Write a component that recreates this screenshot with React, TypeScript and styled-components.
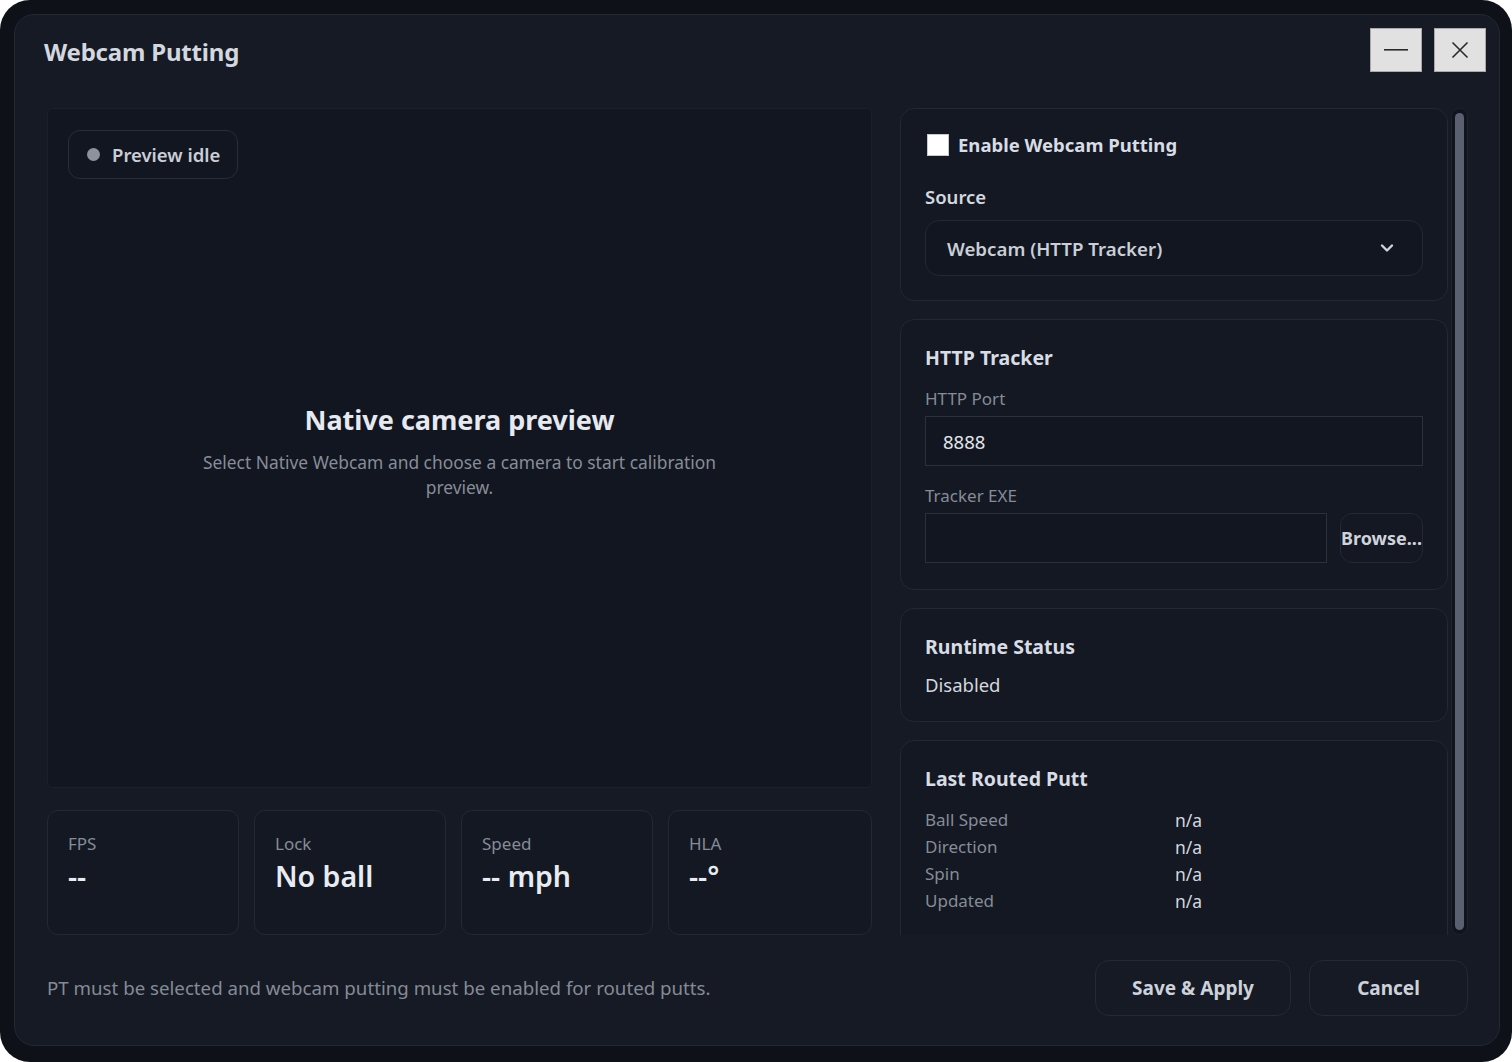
import React from "react";
import styled, { createGlobalStyle } from "styled-components";

const GlobalStyle = createGlobalStyle`
	html, body {
		margin: 0;
		padding: 0;
		background: #ffffff;
	}
	body {
		font-family: "Noto Sans", "Open Sans", sans-serif;
		color: #d6dae2;
	}
	* {
		box-sizing: border-box;
	}
`;

const Frame = styled.div`
	width: 1512px;
	height: 1062px;
	background: #0e1218;
	border-radius: 30px;
	padding: 14px 12px 16px 14px;
`;

const Panel = styled.div`
	height: 100%;
	background: #151a24;
	border: 1px solid #222834;
	border-radius: 20px;
	display: flex;
	flex-direction: column;
	padding: 13px 31px 30px 32px;
`;

const Header = styled.div`
	display: flex;
	align-items: flex-start;
	justify-content: space-between;
	height: 58px;
	margin-bottom: 22px;
`;

const Title = styled.h1`
	margin: 0;
	margin-top: 7px;
	margin-left: -3px;
	font-size: 24px;
	font-weight: 700;
	color: #d3d7df;
	letter-spacing: -0.2px;
`;

const WindowButtons = styled.div`
	display: flex;
	gap: 12px;
	margin-right: -18px;
`;

const WinButton = styled.button`
	width: 52px;
	height: 44px;
	background: #e1e1e1;
	border: 1px solid #a9a9a9;
	display: flex;
	align-items: center;
	justify-content: center;
	padding: 0;
	color: #2a2a2a;
`;

const Main = styled.div`
	display: grid;
	grid-template-columns: 825px 1fr;
	column-gap: 28px;
	height: 827px;
`;

const LeftColumn = styled.div`
	display: flex;
	flex-direction: column;
	gap: 22px;
`;

const Preview = styled.div`
	position: relative;
	height: 680px;
	background: #111620;
	border: 1px solid #1b212c;
	border-radius: 6px;
	display: flex;
	flex-direction: column;
	align-items: center;
	justify-content: center;
	padding-top: 4px;
`;

const StatusPill = styled.div`
	position: absolute;
	top: 21px;
	left: 20px;
	display: flex;
	align-items: center;
	gap: 12px;
	height: 49px;
	padding: 0 17px 0 18px;
	border: 1px solid #272d39;
	border-radius: 12px;
	background: #121620;
	font-size: 18.5px;
	font-weight: 600;
	color: #c9ced7;
`;

const Dot = styled.span`
	width: 13px;
	height: 13px;
	border-radius: 50%;
	background: #8d929c;
`;

const PreviewTitle = styled.div`
	font-size: 27px;
	font-weight: 700;
	color: #e6e9ef;
	margin-bottom: 12px;
`;

const PreviewHint = styled.div`
	max-width: 530px;
	text-align: center;
	font-size: 17.4px;
	line-height: 25px;
	color: #878d98;
`;

const Stats = styled.div`
	display: grid;
	grid-template-columns: 192px 192px 192px 1fr;
	gap: 15px;
	height: 125px;
`;

const StatCard = styled.div`
	border: 1px solid #222834;
	border-radius: 11px;
	background: #131823;
	padding: 22px 20px;
`;

const StatLabel = styled.div`
	font-size: 17px;
	color: #868c97;
	line-height: 22px;
`;

const StatValue = styled.div`
	font-size: 28.5px;
	font-weight: 600;
	color: #e8ebf0;
	line-height: 36px;
	margin-top: 3px;
`;

const RightColumn = styled.div`
	display: flex;
	gap: 3px;
	height: 827px;
`;

const CardList = styled.div`
	flex: 1;
	display: flex;
	flex-direction: column;
	gap: 18px;
	overflow: hidden;
`;

const Card = styled.div<{ $h?: number }>`
	flex-shrink: 0;
	height: ${(p) => (p.$h ? `${p.$h}px` : "auto")};
	border: 1px solid #222834;
	border-radius: 14px;
	background: #131822;
	padding: 24px;
`;

const ScrollTrack = styled.div`
	width: 17px;
	padding: 4px 3px;
	border: 1px solid #1d232e;
	border-radius: 9px;
	background: #10141c;
`;

const ScrollThumb = styled.div`
	height: 100%;
	border-radius: 6px;
	background: #5a6070;
`;

const CheckRow = styled.label`
	display: flex;
	align-items: center;
	gap: 9px;
	font-size: 18.5px;
	font-weight: 700;
	color: #d8dce4;
	margin-top: -1px;
`;

const CheckBox = styled.span`
	width: 22px;
	height: 22px;
	background: #ffffff;
	border: 1px solid #c9c9c9;
	margin-left: 2px;
`;

const SectionTitle = styled.div`
	font-size: 19.5px;
	font-weight: 700;
	color: #d8dce4;
	margin-top: 0;
`;

const SubTitle = styled.div`
	font-size: 18.5px;
	font-weight: 600;
	color: #d3d7df;
	margin-top: 27px;
	margin-bottom: 11px;
`;

const Select = styled.div`
	height: 56px;
	border: 1px solid #222834;
	border-radius: 14px;
	background: #121620;
	display: flex;
	align-items: center;
	justify-content: space-between;
	padding: 0 28px 0 21px;
	font-size: 18.7px;
	font-weight: 600;
	color: #c9ced7;
`;

const FieldLabel = styled.div<{ $mt: number }>`
	font-size: 17px;
	color: #868c97;
	margin-top: ${(p) => p.$mt}px;
	margin-bottom: 6px;
`;

const Input = styled.div<{ $w?: number }>`
	height: 50px;
	width: ${(p) => (p.$w ? `${p.$w}px` : "100%")};
	border: 1px solid #2a303c;
	background: #121620;
	display: flex;
	align-items: center;
	padding: 0 17px;
	font-size: 18.5px;
	color: #e2e5ea;
`;

const InputRow = styled.div`
	display: flex;
	gap: 13px;
	margin-top: 2px;
`;

const BrowseButton = styled.button`
	flex: 1;
	height: 50px;
	border: 1px solid #222834;
	border-radius: 12px;
	background: #131822;
	color: #cfd3db;
	font-family: inherit;
	font-size: 18px;
	font-weight: 700;
	padding: 0;
	white-space: nowrap;
	overflow: visible;
`;

const StatusText = styled.div`
	font-size: 18.5px;
	color: #d3d7df;
	margin-top: 12px;
`;

const PuttGrid = styled.div`
	display: grid;
	grid-template-columns: 250px 1fr;
	margin-top: 14px;
`;

const PuttLabel = styled.div`
	font-size: 17px;
	line-height: 27px;
	color: #868c97;
`;

const PuttValue = styled.div`
	font-size: 17.5px;
	line-height: 27px;
	color: #d3d7df;
	transform: translateY(1px);
`;

const Footer = styled.div`
	display: flex;
	align-items: center;
	margin-top: 25px;
	height: 55px;
`;

const FooterNote = styled.div`
	flex: 1;
	font-size: 18.7px;
	color: #858b96;
`;

const FooterButton = styled.button<{ $w: number }>`
	width: ${(p) => p.$w}px;
	height: 56px;
	border: 1px solid #232935;
	border-radius: 14px;
	background: #151a24;
	color: #cdd2da;
	font-family: inherit;
	font-size: 19px;
	font-weight: 700;
	margin-left: 18px;
`;

function Chevron() {
	return (
		<svg width="14" height="10" viewBox="0 0 14 10" fill="none">
			<path d="M2 2.5 L7 7.5 L12 2.5" stroke="#cfd3db" strokeWidth="2.4" strokeLinecap="round" strokeLinejoin="round" />
		</svg>
	);
}

const stats = [
	{ label: "FPS", value: "--" },
	{ label: "Lock", value: "No ball" },
	{ label: "Speed", value: "-- mph" },
	{ label: "HLA", value: "--°" },
];

const putt = [
	["Ball Speed", "n/a"],
	["Direction", "n/a"],
	["Spin", "n/a"],
	["Updated", "n/a"],
];

export default function App() {
	return (
		<>
			<GlobalStyle />
			<Frame>
				<Panel>
					<Header>
						<Title>Webcam Putting</Title>
						<WindowButtons>
							<WinButton aria-label="Minimize">
								<svg width="24" height="4" viewBox="0 0 24 4">
									<rect x="0" y="1" width="24" height="1.6" fill="#2b2b2b" />
								</svg>
							</WinButton>
							<WinButton aria-label="Close">
								<svg width="18" height="18" viewBox="0 0 18 18">
									<path d="M1.5 1.5 L16.5 16.5 M16.5 1.5 L1.5 16.5" stroke="#2b2b2b" strokeWidth="1.6" />
								</svg>
							</WinButton>
						</WindowButtons>
					</Header>

					<Main>
						<LeftColumn>
							<Preview>
								<StatusPill>
									<Dot />
									Preview idle
								</StatusPill>
								<PreviewTitle>Native camera preview</PreviewTitle>
								<PreviewHint>Select Native Webcam and choose a camera to start calibration preview.</PreviewHint>
							</Preview>
							<Stats>
								{stats.map((s) => (
									<StatCard key={s.label}>
										<StatLabel>{s.label}</StatLabel>
										<StatValue>{s.value}</StatValue>
									</StatCard>
								))}
							</Stats>
						</LeftColumn>

						<RightColumn>
							<CardList>
								<Card $h={193}>
									<CheckRow>
										<CheckBox />
										Enable Webcam Putting
									</CheckRow>
									<SubTitle>Source</SubTitle>
									<Select>
										Webcam (HTTP Tracker)
										<Chevron />
									</Select>
								</Card>
								<Card $h={271}>
									<SectionTitle>HTTP Tracker</SectionTitle>
									<FieldLabel $mt={16}>HTTP Port</FieldLabel>
									<Input>8888</Input>
									<FieldLabel $mt={18}>Tracker EXE</FieldLabel>
									<InputRow>
										<Input $w={402} />
										<BrowseButton>Browse...</BrowseButton>
									</InputRow>
								</Card>
								<Card $h={114}>
									<SectionTitle>Runtime Status</SectionTitle>
									<StatusText>Disabled</StatusText>
								</Card>
								<Card $h={220}>
									<SectionTitle>Last Routed Putt</SectionTitle>
									<PuttGrid>
										{putt.map(([k, v]) => (
											<React.Fragment key={k}>
												<PuttLabel>{k}</PuttLabel>
												<PuttValue>{v}</PuttValue>
											</React.Fragment>
										))}
									</PuttGrid>
								</Card>
							</CardList>
							<ScrollTrack>
								<ScrollThumb />
							</ScrollTrack>
						</RightColumn>
					</Main>

					<Footer>
						<FooterNote>PT must be selected and webcam putting must be enabled for routed putts.</FooterNote>
						<FooterButton $w={196}>Save &amp; Apply</FooterButton>
						<FooterButton $w={159}>Cancel</FooterButton>
					</Footer>
				</Panel>
			</Frame>
		</>
	);
}
